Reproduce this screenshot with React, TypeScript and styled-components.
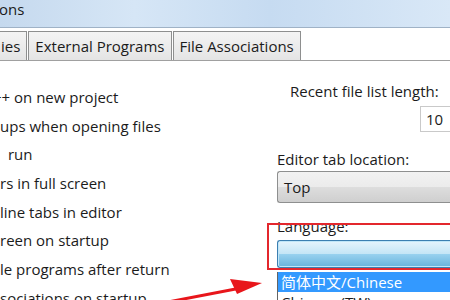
import styled, { createGlobalStyle } from "styled-components";

const GlobalStyle = createGlobalStyle`
  html, body {
    margin: 0;
    padding: 0;
    background: #ffffff;
  }
  body {
    font-family: "Open Sans", "Noto Sans", "Noto Sans CJK SC", sans-serif;
    font-size: 15px;
    color: #1b1b1b;
  }
`;

const options = [
  { text: "++ on new project", shift: -7 },
  { text: "ups when opening files", shift: 0 },
  { text: " run", shift: 4 },
  { text: "rs in full screen", shift: 0 },
  { text: "line tabs in editor", shift: 0 },
  { text: "reen on startup", shift: 0 },
  { text: "le programs after return", shift: 0 },
  { text: "sociations on startup", shift: 0 },
];

const tabs = ["ies", "External Programs", "File Associations"];

export default function App() {
  return (
    <Window>
      <GlobalStyle />
      <TitleBar>
        <Title>ons</Title>
      </TitleBar>
      <TabStrip>
        {tabs.map((t, i) => (
          <Tab key={t} first={i === 0}>
            {t}
          </Tab>
        ))}
      </TabStrip>
      <Content>
        <OptionList>
          {options.map((o) => (
            <OptionRow key={o.text} shift={o.shift}>
              {o.text}
            </OptionRow>
          ))}
        </OptionList>
        <Side>
          <RecentLabel>Recent file list length:</RecentLabel>
          <NumberBox>10</NumberBox>
          <FieldLabel gap={16}>Editor tab location:</FieldLabel>
          <Select>Top</Select>
          <FieldLabel gap={12}>Language:</FieldLabel>
          <LangCombo />
          <DropList>
            <DropItem selected>简体中文/Chinese</DropItem>
            <DropItem>Chinese (TW)</DropItem>
          </DropList>
        </Side>
      </Content>
      <Highlight />
      <Arrow width="110" height="30" viewBox="0 0 110 30">
        <line x1="2" y1="28" x2="80" y2="13" stroke="#e8161b" strokeWidth="3" />
        <polygon points="96,9 64,5 71,20" fill="#e8161b" />
      </Arrow>
    </Window>
  );
}

const Window = styled.div`
  position: relative;
  width: 450px;
  height: 300px;
  overflow: hidden;
  background: #ffffff;
`;

const TitleBar = styled.div`
  height: 28px;
  background: linear-gradient(90deg, #c5d9ee 0%, #d6e6f6 30%, #c6dbf1 60%, #d9e8f7 100%);
  border-bottom: 1px solid #9fb2c6;
  box-sizing: border-box;
  display: flex;
  align-items: flex-start;
`;

const Title = styled.span`
  font-size: 15px;
  line-height: 18px;
  color: #1a1a1a;
  margin-left: -1px;
`;

const TabStrip = styled.div`
  height: 33px;
  background: #ffffff;
  border-bottom: 1px solid #a0a0a0;
  box-sizing: border-box;
  display: flex;
  align-items: flex-end;
`;

const Tab = styled.div<{ first?: boolean }>`
  height: 29px;
  box-sizing: border-box;
  display: flex;
  align-items: center;
  padding: 0 6px;
  margin-left: ${(p) => (p.first ? "-6px" : "1px")};
  background: linear-gradient(#f4f4f4, #e4e4e4);
  border: 1px solid #8e8f8f;
  border-bottom: none;
  color: #1b1b1b;
  white-space: nowrap;
`;

const Content = styled.div`
  display: grid;
  grid-template-columns: 277px 1fr;
  padding-top: 22px;
`;

const OptionList = styled.div`
  display: flex;
  flex-direction: column;
`;

const OptionRow = styled.div<{ shift: number }>`
  height: 28.7px;
  line-height: 28.7px;
  margin-left: ${(p) => p.shift}px;
  white-space: pre;
`;

const Side = styled.div`
  display: flex;
  flex-direction: column;
  margin-top: -3px;
`;

const RecentLabel = styled.div`
  margin-left: 13px;
  height: 22px;
  line-height: 22px;
  white-space: nowrap;
`;

const NumberBox = styled.div`
  align-self: flex-start;
  margin-left: 143px;
  margin-top: 4px;
  width: 60px;
  height: 26px;
  box-sizing: border-box;
  border: 1px solid #c9c9c9;
  border-right: none;
  padding-left: 5px;
  line-height: 24px;
`;

const FieldLabel = styled.div<{ gap: number }>`
  margin-top: ${(p) => p.gap}px;
  height: 22px;
  line-height: 22px;
  white-space: nowrap;
`;

const Select = styled.div`
  margin-top: 1px;
  height: 32px;
  box-sizing: border-box;
  border: 1px solid #8e8f8f;
  border-right: none;
  border-radius: 3px 0 0 3px;
  background: linear-gradient(#f2f2f2 0%, #ebebeb 50%, #dddddd 51%, #cfcfcf 100%);
  padding-left: 6px;
  line-height: 30px;
  width: 200px;
`;

const LangCombo = styled.div`
  margin-top: 3px;
  height: 28px;
  width: 200px;
  box-sizing: border-box;
  border: 1px solid #3c7fb1;
  border-right: none;
  border-radius: 3px 0 0 3px;
  background: linear-gradient(#e5f4fc 0%, #c4e5f6 50%, #98d1ef 51%, #68b3db 100%);
  box-shadow: inset 0 0 0 1px #c0e6f8;
`;

const DropList = styled.div`
  margin-top: 4px;
  border-left: 1px solid #646464;
  background: #ffffff;
  display: flex;
  flex-direction: column;
`;

const DropItem = styled.div<{ selected?: boolean }>`
  height: 20px;
  line-height: 20px;
  padding-left: 3px;
  white-space: nowrap;
  background: ${(p) => (p.selected ? "#3399ff" : "#ffffff")};
  color: ${(p) => (p.selected ? "#ffffff" : "#1b1b1b")};
`;

const Highlight = styled.div`
  position: absolute;
  left: 267px;
  top: 223px;
  width: 200px;
  height: 47px;
  box-sizing: border-box;
  border: 2px solid #e3272d;
`;

const Arrow = styled.svg`
  position: absolute;
  left: 166px;
  top: 274px;
`;
